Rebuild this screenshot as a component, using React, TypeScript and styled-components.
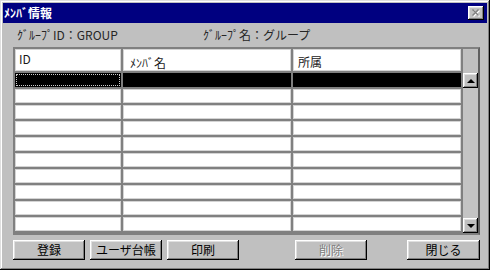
import React from "react";
import styled, { createGlobalStyle, css } from "styled-components";

const GlobalStyle = createGlobalStyle`
  html, body {
    margin: 0;
    padding: 0;
    background: #ffffff;
  }
  body {
    font-family: "Noto Sans CJK JP", "Noto Sans", sans-serif;
  }
`;

const raised = css`
  box-shadow: inset -1px -1px #000000, inset 1px 1px #ffffff,
    inset -2px -2px #808080, inset 2px 2px #dfdfdf;
`;

// Window frame

const Window = styled.div`
  box-sizing: border-box;
  width: 490px;
  height: 270px;
  padding: 3px;
  background: #c0c0c0;
  box-shadow: inset -1px -1px #000000, inset 1px 1px #dfdfdf,
    inset -2px -2px #808080, inset 2px 2px #ffffff;
  display: flex;
  flex-direction: column;
`;

const TitleBar = styled.div`
  height: 20px;
  background: #000080;
  display: flex;
  align-items: center;
  justify-content: space-between;
  padding-left: 1px;
`;

const TitleText = styled.span`
  color: #ffffff;
  font-size: 12px;
  font-weight: 700;
  line-height: 14px;
`;

const CloseButton = styled.div`
  width: 16px;
  height: 14px;
  margin-right: 3px;
  background: #c0c0c0;
  ${raised};
  display: flex;
  align-items: center;
  justify-content: center;
`;

// Info line

const InfoRow = styled.div`
  height: 24px;
  display: flex;
  align-items: center;
  padding-left: 14px;
`;

const InfoLabel = styled.span<{ $width?: number }>`
  width: ${(p) => (p.$width ? `${p.$width}px` : "auto")};
  font-size: 12px;
  line-height: 14px;
  color: #262626;
  white-space: nowrap;
`;

// Grid

const GridFrame = styled.div`
  margin-left: 10px;
  width: 467px;
  height: 188px;
  box-sizing: border-box;
  border-top: 2px solid #808080;
  border-left: 2px solid #808080;
  border-right: 2px solid #606060;
  border-bottom: 2px solid #808080;
  display: flex;
`;

const Table = styled.div`
  display: grid;
  grid-template-columns: 106px 168px 168px;
  grid-template-rows: 22px repeat(10, 14px);
  gap: 2px;
  padding: 0 2px 2px 0;
  background: #808080;
`;

const HeadCell = styled.div<{ $top: number; $left: number }>`
  box-sizing: border-box;
  background: #ffffff;
  border: 1px solid #d4d4d4;
  padding: ${(p) => `${p.$top}px 0 0 ${p.$left}px`};
  font-size: 12px;
  line-height: 12px;
  color: #1a1a1a;
`;

const Cell = styled.div<{ $selected?: boolean; $focus?: boolean }>`
  box-sizing: border-box;
  background: ${(p) => (p.$selected ? "#000000" : "#ffffff")};
  border: 1px solid ${(p) => (p.$selected ? "#000000" : "#d4d4d4")};
  ${(p) =>
    p.$focus &&
    css`
      outline: 1px dotted #d0d0d0;
      outline-offset: -2px;
    `}
`;

const ScrollColumn = styled.div`
  width: 15px;
  display: flex;
  flex-direction: column;
`;

const HeaderFiller = styled.div`
  height: 24px;
  background: #c0c0c0;
`;

const ScrollButton = styled.div`
  width: 15px;
  height: 15px;
  background: #c0c0c0;
  ${raised};
  display: flex;
  align-items: center;
  justify-content: center;
`;

const ScrollTrack = styled.div`
  flex: 1;
  background: #c4c4c4;
`;

const Arrow = styled.div<{ $down?: boolean }>`
  width: 0;
  height: 0;
  border-left: 4px solid transparent;
  border-right: 4px solid transparent;
  ${(p) =>
    p.$down
      ? "border-top: 4px solid #000;"
      : "border-bottom: 4px solid #000;"}
`;

// Buttons

const ButtonRow = styled.div`
  display: flex;
  margin-top: 5px;
  padding-left: 10px;
`;

const Button = styled.div<{ $gap?: number; $width?: number; $disabled?: boolean }>`
  width: ${(p) => p.$width ?? 72}px;
  height: 20px;
  margin-left: ${(p) => p.$gap ?? 0}px;
  background: #c0c0c0;
  ${raised};
  display: flex;
  align-items: center;
  justify-content: center;
  font-size: 12px;
  line-height: 14px;
  color: ${(p) => (p.$disabled ? "#808080" : "#000000")};
  text-shadow: ${(p) => (p.$disabled ? "1px 1px #ffffff" : "none")};
`;

const CloseIcon = () => (
  <svg width="9" height="8" viewBox="0 0 9 8">
    <path d="M1.5 1.5 L7.5 7.5 M7.5 1.5 L1.5 7.5" stroke="#ffffff" strokeWidth="1.4" />
    <path d="M0.5 0.5 L6.5 6.5 M6.5 0.5 L0.5 6.5" stroke="#808080" strokeWidth="1.4" />
  </svg>
);

const rows = Array.from({ length: 10 }, (_, i) => i);

export default function App() {
  return (
    <>
      <GlobalStyle />
      <Window>
        <TitleBar>
          <TitleText>ﾒﾝﾊﾞ情報</TitleText>
          <CloseButton>
            <CloseIcon />
          </CloseButton>
        </TitleBar>
        <InfoRow>
          <InfoLabel $width={186}>ｸﾞﾙｰﾌﾟID：GROUP</InfoLabel>
          <InfoLabel>ｸﾞﾙｰﾌﾟ名：グループ</InfoLabel>
        </InfoRow>
        <GridFrame>
          <Table>
            <HeadCell $top={3} $left={3}>ID</HeadCell>
            <HeadCell $top={7} $left={6}>ﾒﾝﾊﾞ名</HeadCell>
            <HeadCell $top={6} $left={4}>所属</HeadCell>
            {rows.map((r) => (
              <React.Fragment key={r}>
                <Cell $selected={r === 0} $focus={r === 0} />
                <Cell $selected={r === 0} />
                <Cell $selected={r === 0} />
              </React.Fragment>
            ))}
          </Table>
          <ScrollColumn>
            <HeaderFiller />
            <ScrollButton>
              <Arrow />
            </ScrollButton>
            <ScrollTrack />
            <ScrollButton>
              <Arrow $down />
            </ScrollButton>
          </ScrollColumn>
        </GridFrame>
        <ButtonRow>
          <Button>登録</Button>
          <Button $gap={5}>ユーザ台帳</Button>
          <Button $gap={5}>印刷</Button>
          <Button $gap={56} $disabled>削除</Button>
          <Button $gap={40} $width={73}>閉じる</Button>
        </ButtonRow>
      </Window>
    </>
  );
}
